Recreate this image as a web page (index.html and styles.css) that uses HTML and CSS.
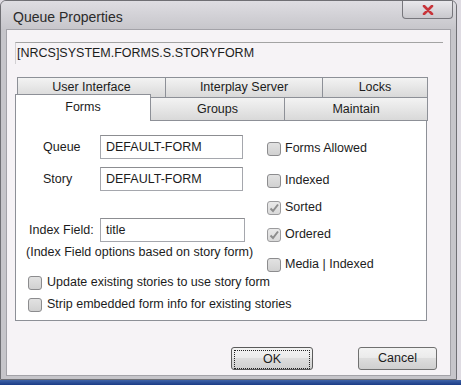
FILE: index.html
```html
<!DOCTYPE html>
<html lang="en">
<head>
    <meta charset="UTF-8">
    <title>Queue Properties</title>
    <link rel="stylesheet" href="styles.css">
</head>
<body>
    <div class="window">
        <div class="titlebar">
            <span class="title">Queue Properties</span>
            <div class="close">
                <svg width="12" height="10" viewBox="0 0 12 10">
                    <path d="M2 1 L10 9 M10 1 L2 9" stroke="#c8343a" stroke-width="2.6" stroke-linecap="round"/>
                </svg>
            </div>
        </div>
        <div class="frame">
            <div class="client">
                <div class="path">[NRCS]SYSTEM.FORMS.S.STORYFORM</div>

                <div class="tab-row back">
                    <div class="tab ui">User Interface</div>
                    <div class="tab interplay">Interplay Server</div>
                    <div class="tab locks">Locks</div>
                </div>
                <div class="tab-row front">
                    <div class="tab forms active">Forms</div>
                    <div class="tab groups">Groups</div>
                    <div class="tab maintain">Maintain</div>
                </div>

                <div class="panel">
                    <div class="fields">
                        <div class="field">
                            <label class="short">Queue</label>
                            <div class="input">DEFAULT-FORM</div>
                        </div>
                        <div class="field story">
                            <label class="short">Story</label>
                            <div class="input">DEFAULT-FORM</div>
                        </div>
                        <div class="field index">
                            <label class="long">Index Field:</label>
                            <div class="input wide">title</div>
                        </div>
                        <div class="note">(Index Field options based on story form)</div>
                    </div>

                    <div class="options">
                        <div class="check allowed"><span class="box"></span>Forms Allowed</div>
                        <div class="check indexed"><span class="box"></span>Indexed</div>
                        <div class="check"><span class="box checked"><svg width="12" height="12" viewBox="0 0 12 12"><path d="M2.5 6.5 L5 9 L10 2.5" fill="none" stroke="#8d8d8d" stroke-width="2"/></svg></span>Sorted</div>
                        <div class="check"><span class="box checked"><svg width="12" height="12" viewBox="0 0 12 12"><path d="M2.5 6.5 L5 9 L10 2.5" fill="none" stroke="#8d8d8d" stroke-width="2"/></svg></span>Ordered</div>
                        <div class="check media"><span class="box"></span>Media | Indexed</div>
                    </div>

                    <div class="extra">
                        <div class="check"><span class="box"></span>Update existing stories to use story form</div>
                        <div class="check strip"><span class="box"></span>Strip embedded form info for existing stories</div>
                    </div>
                </div>

                <div class="actions">
                    <div class="btn ok"><span class="focus">OK</span></div>
                    <div class="btn cancel">Cancel</div>
                </div>
            </div>
        </div>
    </div>
    <div class="taskbar"></div>
</body>
</html>
```

FILE: styles.css
```css
body {
    margin: 0;
    background-color: #dedbe2;
    font-family: "Liberation Sans", Arial, sans-serif;
    font-size: 12.5px;
    color: #1c1c1c;
    overflow: hidden;
}

.window {
    width: 457px;
    height: 380px;
    box-sizing: border-box;
    border: 1px solid #6f6f74;
    border-radius: 6px 6px 0 0;
    background: #c6c5ca;
    display: flex;
    flex-direction: column;
}

.titlebar {
    height: 28px;
    flex: none;
    display: flex;
    justify-content: space-between;
    align-items: flex-start;
    background: linear-gradient(to bottom, #dedde2, #c7c6cb);
    border-radius: 5px 5px 0 0;
}

.title {
    padding: 7px 0 0 12px;
    line-height: 18px;
    font-size: 14px;
    color: #2b2b2b;
}

.close {
    width: 51px;
    height: 18px;
    margin-right: 3px;
    box-sizing: border-box;
    border: 1px solid #77767c;
    border-top: none;
    border-radius: 0 0 4px 4px;
    background: linear-gradient(to bottom, #e9e8ec, #c9c8cd);
    display: flex;
    justify-content: center;
    align-items: center;
}

.frame {
    flex: 1;
    padding: 0 5px 3px 5px;
    display: flex;
}

.client {
    flex: 1;
    border: 1px solid #a3a2a8;
    background-color: #f6f3f6;
    padding-left: 8px;
}

.path {
    margin-top: 12px;
    width: 428px;
    height: 22px;
    box-sizing: border-box;
    border-top: 1px solid #a3a3a3;
    border-left: 1px solid #d2d0d3;
    padding-left: 1px;
    line-height: 20px;
}

/* tabs */
.tab-row {
    display: flex;
    width: 412px;
}

.tab-row.back {
    margin-top: 13px;
    padding-left: 2px;
    box-sizing: border-box;
    height: 20px;
}

.tab-row.front {
    height: 24px;
    align-items: flex-end;
}

.tab {
    box-sizing: border-box;
    border: 1px solid #8d9097;
    background: linear-gradient(to bottom, #f3f3f3, #e6e6e6 50%, #d9d9d9);
    text-align: center;
    flex: none;
}

.tab + .tab {
    margin-left: -1px;
}

.back .tab {
    height: 20px;
    border-bottom: none;
    line-height: 19px;
}

.front .tab {
    height: 24px;
    line-height: 22px;
}

.front .tab.active {
    height: 27px;
    border-bottom: none;
    background: #fff;
    padding-top: 2px;
    line-height: 20px;
}

.ui { width: 149px; }
.interplay { width: 158px; }
.locks { width: 106px; }
.forms { width: 136px; }
.groups { width: 135px; }
.maintain { width: 144px; }

.panel {
    width: 412px;
    height: 200px;
    box-sizing: border-box;
    border: 1px solid #8d9097;
    border-top: none;
    background-color: #fff;
    padding-top: 14px;
    display: grid;
    grid-template-columns: 251px 1fr;
    grid-template-areas:
        "fields options"
        "extra extra";
    align-content: start;
}

.fields { grid-area: fields; }
.options { grid-area: options; }
.extra { grid-area: extra; padding-left: 12px; }

.field {
    display: flex;
    height: 24px;
}

.field.story { margin-top: 8px; }
.field.index { margin-top: 27px; }

.field label {
    width: 84px;
    box-sizing: border-box;
    line-height: 24px;
}

.field label.short { padding-left: 27px; }
.field label.long { padding-left: 13px; }

.input {
    width: 143px;
    box-sizing: border-box;
    border: 1px solid #a5a7ad;
    border-top-color: #8c8d91;
    background: #fff;
    padding-left: 5px;
    line-height: 22px;
}

.input.wide { width: 145px; }

.note {
    margin: 2px 0 0 10px;
    line-height: 16px;
    white-space: nowrap;
}

/* checkboxes */
.check {
    display: flex;
    align-items: center;
    gap: 4px;
    height: 15px;
    line-height: 15px;
    white-space: nowrap;
}

.options .check { margin-top: 12px; }
.options .check.allowed { margin-top: 6px; }
.options .check.indexed { margin-top: 17px; }
.options .check.media { margin-top: 15px; }

.extra .check {
    margin-top: 3px;
    gap: 5px;
}

.extra .check.strip { margin-top: 7px; }

.box {
    width: 14px;
    height: 14px;
    box-sizing: border-box;
    border: 1px solid #8c8c8e;
    border-radius: 3px;
    background: linear-gradient(to bottom, #e2e2e2, #d1d1d1);
    display: flex;
    justify-content: center;
    align-items: center;
    flex: none;
}

.box.checked {
    background: linear-gradient(to bottom, #e9e9e9, #dadada);
    border-color: #9b9b9d;
}

/* buttons */
.actions {
    display: flex;
    justify-content: flex-end;
    gap: 45px;
    margin-top: 26px;
    padding-right: 13px;
}

.btn {
    height: 23px;
    box-sizing: border-box;
    border: 1px solid #707070;
    border-radius: 3px;
    background: linear-gradient(to bottom, #f3f3f3, #ebebeb 45%, #dddddd 50%, #cfcfcf);
    text-align: center;
    line-height: 21px;
}

.btn.ok {
    width: 82px;
    padding: 2px;
    border-color: #5a5a5a;
}

.btn.ok .focus {
    display: block;
    height: 17px;
    border: 1px dotted #222;
    line-height: 17px;
}

.btn.cancel {
    width: 79px;
}

.taskbar {
    height: 5px;
    background: linear-gradient(to bottom, #3f63a8, #1b3c86);
}
```
